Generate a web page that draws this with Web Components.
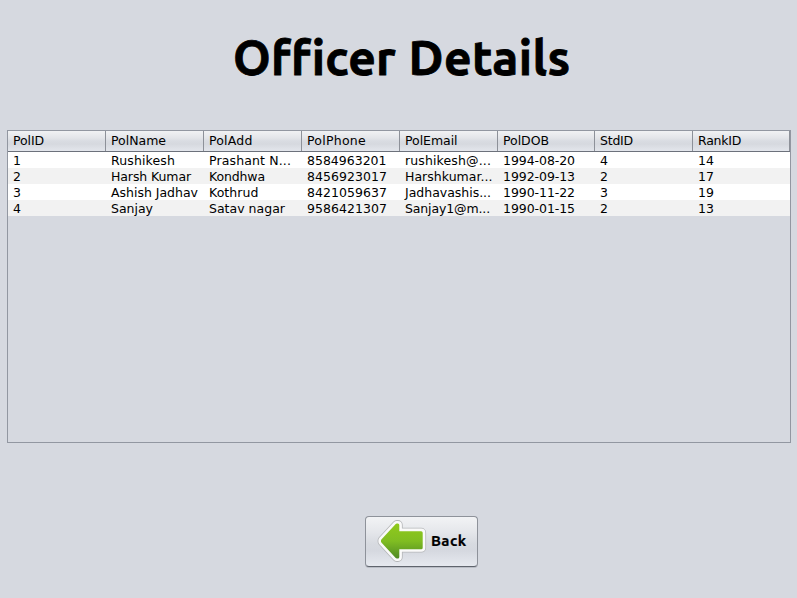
<!DOCTYPE html>
<html lang="en"><head><meta charset="utf-8"><title>Officer Details</title>
<style>html,body{margin:0;height:100%;overflow:hidden;background:#d6d9e0}</style></head>
<body><officer-window></officer-window>
<script>
// Text set to a given advance width by spreading the difference over its letters.
class FitText extends HTMLElement{
  connectedCallback(){
    const r=this.attachShadow({mode:'open'});
    r.innerHTML='<style>:host{display:inline-block;white-space:pre}span{display:inline-block}</style><span><slot></slot></span>';
    const s=r.querySelector('span'),w=+this.getAttribute('w'),n=this.textContent.length;
    if(w&&n)s.style.letterSpacing=((w-s.getBoundingClientRect().width)/n)+'px';
  }
}
customElements.define('fit-text',FitText);

class PageTitle extends HTMLElement{
  connectedCallback(){
    this.attachShadow({mode:'open'}).innerHTML=`<style>
    :host{display:block}
    h1{margin:0;display:flex;gap:12.5px;font:bold 48px/64px "Ubuntu","Noto Sans",sans-serif;font-variant-ligatures:none;-webkit-text-stroke:.8px #000;color:#000}
    </style><h1><fit-text w="163">Officer</fit-text><fit-text w="162">Details</fit-text></h1>`;
  }
}
customElements.define('page-title',PageTitle);

const heads=[['PolID',31],['PolName',55],['PolAdd',43.5],['PolPhone',59],['PolEmail',52.5],['PolDOB',46],['StdID',33],['RankID',43]];
const rows=[
 [['1',8],['Rushikesh',64],['Prashant N...',82],['8584963201',79.5],['rushikesh@...',86],['1994-08-20',72],['4',8],['14',16]],
 [['2',8],['Harsh Kumar',80],['Kondhwa',56],['8456923017',80],['Harshkumar...',87.5],['1992-09-13',72],['2',8],['17',16]],
 [['3',8],['Ashish Jadhav',87],['Kothrud',49.5],['8421059637',80],['Jadhavashis...',86],['1990-11-22',72],['3',8],['19',16]],
 [['4',8],['Sanjay',42],['Satav nagar',76],['9586421307',80],['Sanjay1@m...',85],['1990-01-15',72],['2',8],['13',16]]];
class DataTable extends HTMLElement{
  connectedCallback(){
    const cells=a=>a.map(([t,w])=>`<div class="c"><fit-text w="${w}">${t}</fit-text></div>`).join('');
    this.attachShadow({mode:'open'}).innerHTML=`<style>
    :host{display:block;box-sizing:border-box;width:784px;height:313px;border:1px solid #9297a1;font:12.5px/18px "DejaVu Sans",sans-serif;color:#000}
    .r{display:grid;grid-template-columns:98px 98px 98px 98px 98px 97px 98px 97px;height:16px;background:#fff}
    .r:nth-child(even){background:#f2f2f2}
    .c{padding-left:5px;white-space:nowrap;min-width:0}
    .r.h{height:21px;box-sizing:border-box;line-height:20px;border-bottom:1px solid #6c717b;background:linear-gradient(#f1f2f4 0,#e3e5e9 35%,#d9dce2 50%,#d6d9df 65%,#e3e6ec 100%)}
    .h .c{height:20px;box-sizing:border-box;border-right:1px solid #8d9199}
    </style><div class="r h">${cells(heads)}</div>${rows.map(r=>`<div class="r">${cells(r)}</div>`).join('')}`;
  }
}
customElements.define('data-table',DataTable);

class BackButton extends HTMLElement{
  connectedCallback(){
    const d='M19.8 5 5.5 20.5V21.5L19.8 37H20.8V27.7H44.2V12.7H20.8V5Z';
    this.attachShadow({mode:'open'}).innerHTML=`<style>
    :host{display:block}
    button{box-sizing:border-box;width:113px;height:51px;padding:0 0 0 11px;border:1px solid #8e929a;border-bottom-color:#5f646d;border-radius:4px;display:flex;align-items:center;gap:4px;background:linear-gradient(#f2f3f5 0,#e5e7eb 30%,#d7dae0 55%,#d5d8df 68%,#e6e9ef 100%);box-shadow:0 1px 0 #b9bdc5;font:bold 15px/18px "Ubuntu","Noto Sans",sans-serif;color:#000}
    svg{display:block;flex:none}
    fit-text{padding-bottom:2px;-webkit-text-stroke:.2px #000}
    </style><button><svg width="50" height="44" viewBox="0 0 50 44" stroke-linejoin="round">
    <defs><linearGradient id="g" gradientUnits="userSpaceOnUse" x1="0" y1="3" x2="0" y2="39"><stop offset="0" stop-color="#91ca1c"/><stop offset=".5" stop-color="#80bd22"/><stop offset="1" stop-color="#4f8925"/></linearGradient></defs>
    <path d="${d}" fill="#b4b6b8" stroke="#b4b6b8" stroke-width="9.8"/>
    <path d="${d}" fill="#fafafa" stroke="#fafafa" stroke-width="8.2"/>
    <path d="${d}" fill="url(#g)" stroke="url(#g)" stroke-width="3"/>
    </svg><fit-text w="35.5">Back</fit-text></button>`;
  }
}
customElements.define('back-button',BackButton);

class OfficerWindow extends HTMLElement{
  connectedCallback(){
    this.attachShadow({mode:'open'}).innerHTML=`<style>
    :host{display:flex;flex-direction:column;align-items:flex-start;box-sizing:border-box;width:797px;height:598px;padding:25px 0 0 7px;background:#d6d9e0}
    page-title{margin-left:226px;height:105px}
    back-button{margin:73px 0 0 358px}
    </style><page-title></page-title><data-table></data-table><back-button></back-button>`;
  }
}
customElements.define('officer-window',OfficerWindow);
</script></body></html>
